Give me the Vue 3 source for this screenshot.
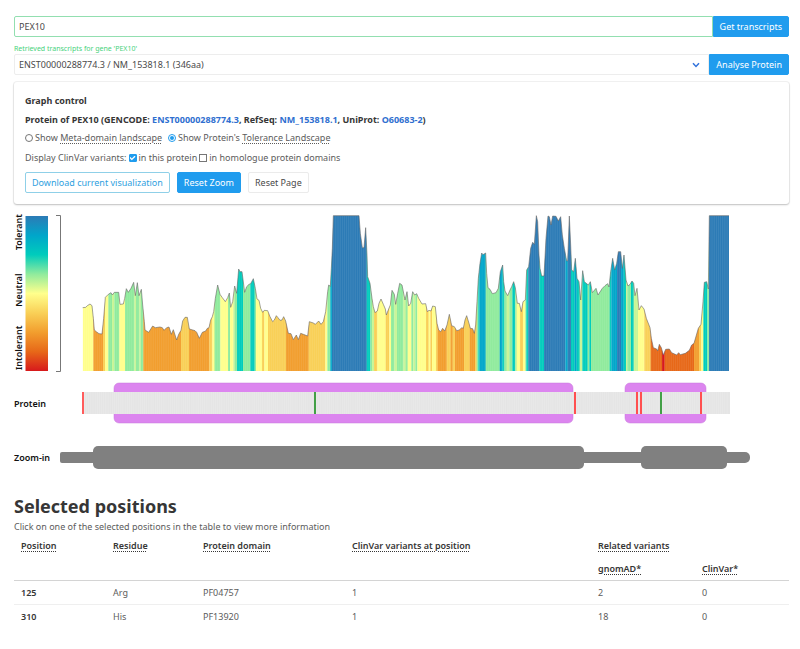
<script setup>
import { ref } from 'vue'

const gene = ref('PEX10')
const transcript = ref('ENST00000288774.3')
const landscape = ref('tolerance')
const inProtein = ref(true)
const inHomologues = ref(false)

const palette = {
  B: '#2c7bb6', A: '#00a6ca', T: '#00ccbc', G: '#90eb9d', L: '#c8f595',
  Y: '#ffff8c', S: '#f9d057', O: '#f29e2e', R: '#e76818', D: '#d7191c'
}
const legend = ['B', 'A', 'T', 'G', 'Y', 'S', 'O', 'R', 'D'].map((k, i) => ({
  offset: i / 8, color: palette[k]
}))

/* Tolerance profile in thirds of a chart unit: x,y pairs per segment with its x origin */
const segments = [
  [0, '248,308 257,307 262,302 270,297 276,302 280,340 283,375 290,381 297,386 306,387 311,340 316,277 325,268 333,263 337,270 343,262 356,262 360,298 370,297 374,280 379,251 385,262 393,250 401,232 406,272 412,233 417,272 424,253 428,300 433,350 435,375 446,382 458,363 466,368 480,366 487,368 492,376 500,368 507,366 514,388 520,374 530,405 536,388 543,376 548,348'],
  [540, '15,337 22,337 28,372 45,377 50,382 58,400 67,382 77,378 82,370 87,368 92,345 97,335 101,320 106,280 113,240 120,268 127,278 136,290 143,278 148,264 152,307 158,290 164,243 170,265 176,192 180,200 186,200 194,262 200,245 207,238 212,236 220,221 226,250 231,282 237,286 242,310 248,322 253,316 263,317 270,335 278,350 283,345 289,332 294,338 300,346 306,345 311,335 317,348 325,385 333,386 340,404 349,390 355,404 362,385 370,388 383,393 388,350 400,354 406,358 416,348 423,358 430,350 437,320 443,260 446,240 451,244 454,190 457,130 460,32 537,32 541,85 547,128 552,128 557,68 561,150'],
  [1080, '23,215 30,235 36,280 40,305 45,323 52,318 57,295 63,282 70,298 76,312 79,330 86,312 91,300 96,256 103,268 107,298 113,265 119,235 126,240 135,285 141,260 146,303 152,295 158,260 164,270 170,266 176,280 186,297 197,296 202,320 207,316 213,318 218,303 226,305 231,355 236,375 242,380 248,370 254,378 261,360 268,328 275,362 283,365 290,377 298,375 305,368 310,370 315,345 320,332 327,355 331,370 338,371 343,385 347,360 351,290 355,220 360,175 365,144 369,149 377,144 380,205 384,248 390,253 397,266 408,263 415,250 421,200 428,180 431,230 435,258 443,272 450,255 455,245 461,230 466,248 472,295 478,295 484,320 489,290 496,285 500,195 506,185 512,130 518,112 523,118 529,32 533,50 537,150 540,190 545,213'],
  [1620, '12,213 18,100 24,33 28,35 33,60 38,33 48,34 55,48 62,35 67,90 73,130 80,168 83,168 88,33 92,120 95,195 101,200 106,160 111,220 117,230 122,285 128,197 133,230 145,240 151,230 157,263 168,250 174,270 187,250 195,242 203,236 207,246 212,200 218,160 224,195 230,175 235,140 242,140 247,190 252,150 258,225 264,243 270,238 276,228 281,235 285,272 291,250 297,315 304,302 312,312 319,340 330,368 334,400 340,428 350,432 353,438 358,418 364,428 370,450 377,433 388,432 395,443 410,450 416,443 421,449 436,445 448,436 455,420 462,415 475,370 483,358 489,290 493,232 500,230 505,252 508,32 567,32']
]
const curve = segments.flatMap(([origin, pairs]) =>
  pairs.split(' ').map(p => {
    const [x, y] = p.split(',').map(Number)
    return `${((origin + x) / 3).toFixed(2)},${(205 + y / 3).toFixed(2)}`
  })
)
const area = ['82.67,371', ...curve, '729,371'].join(' ')
const outline = curve.join(' ')

/* Colour bands: start position and palette key */
const bandSegments = [
  [0, '248Y 280O 309S 315Y 325G 336L 343G 358Y 375G 403L 408G 418L 422G 430O 543S 567O'],
  [540, '88S 97Y 102L 105G 121Y 144G 150Y 160L 164G 171T 189G 211T 224G 228Y 246S 253Y 264S 318O 386S 436Y 442G 451A 456B'],
  [1080, '20T 31G 36L 42S 52Y 77S 88Y 93G 103L 111G 130L 137G 143Y 154G 160L 166G 172Y 198S 206Y 211S 216Y 228S 233O 260S 272O 278S 285O 312S 329O 345S 350G 355T 358A 377G 419A 427T 433G 440L 448G 457T 466L 471Y 480S 489Y 496G 499T 505B 538T'],
  [1620, '12B 76A 83B 93T 104A 110T 119L 127T 143G 148T 153G 209T 214A 231B 243A 251T 258L 262G 273T 281L 294Y 313S 332R 366D 374R 462O 477S 484Y 490T 502G 507B']
]
const starts = bandSegments.flatMap(([origin, list]) =>
  list.split(' ').map(b => ({ x: (origin + parseInt(b)) / 3, color: palette[b.slice(-1)] }))
)
const bands = starts.map((b, i) => ({
  ...b, width: (i + 1 < starts.length ? starts[i + 1].x : 729) - b.x + 0.2
}))

const residueStep = 647 / 346
const residues = Array.from({ length: 346 }, (_, i) => 82.5 + i * residueStep)

const domains = [{ x: 114, width: 459 }, { x: 625, width: 81 }]
const variants = [
  { x: 82, color: '#ff5c5c' }, { x: 314, color: '#43a047' }, { x: 574, color: '#ff5050' },
  { x: 636, color: '#ff5050' }, { x: 640, color: '#ff5050' }, { x: 660, color: '#43a047' },
  { x: 700, color: '#ff5050' }
]

const columns = [92, 90, 149, 246, 104, 94]
const rows = [
  { position: 125, residue: 'Arg', domain: 'PF04757', clinvar: 1, gnomad: 2, related: 0 },
  { position: 310, residue: 'His', domain: 'PF13920', clinvar: 1, gnomad: 18, related: 0 }
]
</script>

<template>
  <main class="page">
    <form class="field" @submit.prevent>
      <input v-model="gene" class="control gene" type="text" aria-label="Gene name" />
      <button class="button primary attached">Get transcripts</button>
    </form>
    <p class="help">Retrieved transcripts for gene 'PEX10'</p>
    <form class="field" @submit.prevent>
      <div class="select">
        <select v-model="transcript" class="control" aria-label="Transcript">
          <option value="ENST00000288774.3">ENST00000288774.3 / NM_153818.1 (346aa)</option>
        </select>
        <svg class="chevron" viewBox="0 0 8 6" aria-hidden="true"><path d="M1 1.2 4 4.4 7 1.2" /></svg>
      </div>
      <button class="button primary attached">Analyse Protein</button>
    </form>

    <section class="card">
      <h2 class="line">Graph control</h2>
      <p class="line strong">
        Protein of PEX10 (GENCODE: <a href="#gencode">ENST00000288774.3</a>, RefSeq:
        <a href="#refseq">NM_153818.1</a>, UniProt: <a href="#uniprot">O60683-2</a>)
      </p>
      <div class="line choices">
        <label><input v-model="landscape" type="radio" name="landscape" value="meta" /><span>Show <u>Meta-domain landscape</u></span></label>
        <label><input v-model="landscape" type="radio" name="landscape" value="tolerance" /><span>Show Protein's <u>Tolerance Landscape</u></span></label>
      </div>
      <div class="line checks">
        <span>Display ClinVar variants:</span>
        <label><input v-model="inProtein" type="checkbox" /><span>in this protein</span></label>
        <label><input v-model="inHomologues" type="checkbox" /><span>in homologue protein domains</span></label>
      </div>
      <div class="actions">
        <button class="button outlined">Download current visualization</button>
        <button class="button primary">Reset Zoom</button>
        <button class="button">Reset Page</button>
      </div>
    </section>

    <svg class="chart" viewBox="14 210 775 265" role="img" aria-label="Tolerance landscape">
      <defs>
        <linearGradient id="scale" x1="0" y1="0" x2="0" y2="1">
          <stop v-for="s in legend" :key="s.offset" :offset="s.offset" :stop-color="s.color" />
        </linearGradient>
        <clipPath id="profile"><polygon :points="area" /></clipPath>
      </defs>

      <g class="axis-label">
        <text transform="translate(22 370) rotate(-90)">Intolerant</text>
        <text transform="translate(22 290) rotate(-90)" text-anchor="middle">Neutral</text>
        <text transform="translate(22 214) rotate(-90)" text-anchor="end">Tolerant</text>
      </g>
      <rect x="25.5" y="216" width="22.5" height="155" fill="url(#scale)" />
      <path class="axis" d="M56 215.5h4.5v156H56" />

      <g clip-path="url(#profile)">
        <rect v-for="b in bands" :key="b.x" :x="b.x" y="215" :width="b.width" height="156" :fill="b.color" />
        <rect v-for="x in residues" :key="x" class="seam" :x="x" y="215" width="0.5" height="156" />
      </g>
      <polyline class="outline" :points="outline" />

      <text class="track-label" x="14" y="407">Protein</text>
      <rect v-for="d in domains" :key="d.x" class="domain" :x="d.x" y="383" :width="d.width" height="40" rx="5" />
      <rect class="track" x="82" y="392" width="648" height="22" />
      <rect v-for="x in residues" :key="'t' + x" class="track-seam" :x="x" y="392" width="0.5" height="22" />
      <rect v-for="v in variants" :key="v.x" :x="v.x" y="392" width="2" height="22" :fill="v.color" />

      <text class="track-label" x="14" y="461">Zoom-in</text>
      <g class="zoom">
        <rect x="60" y="452" width="60" height="11" rx="2" />
        <rect x="100" y="452" width="650" height="11" rx="5" />
        <rect x="93" y="446" width="491" height="23" rx="5" />
        <rect x="641" y="446" width="86" height="23" rx="5" />
      </g>
    </svg>

    <section class="positions">
      <h1>Selected positions</h1>
      <p>Click on one of the selected positions in the table to view more information</p>
      <table>
        <colgroup>
          <col v-for="(w, i) in columns" :key="i" :style="{ width: (w / 775) * 100 + '%' }" />
        </colgroup>
        <thead>
          <tr>
            <th rowspan="2"><u>Position</u></th>
            <th rowspan="2"><u>Residue</u></th>
            <th rowspan="2"><u>Protein domain</u></th>
            <th rowspan="2"><u>ClinVar variants at position</u></th>
            <th colspan="2"><u>Related variants</u></th>
          </tr>
          <tr>
            <th><u>gnomAD*</u></th>
            <th><u>ClinVar*</u></th>
          </tr>
        </thead>
        <tbody>
          <tr v-for="r in rows" :key="r.position">
            <th>{{ r.position }}</th>
            <td>{{ r.residue }}</td>
            <td>{{ r.domain }}</td>
            <td>{{ r.clinvar }}</td>
            <td>{{ r.gnomad }}</td>
            <td>{{ r.related }}</td>
          </tr>
        </tbody>
      </table>
    </section>
  </main>
</template>

<style>
body {
  background: #fff;
}
</style>

<style scoped>
.page {
  box-sizing: border-box;
  padding: 16px 11px 20px 14px;
  color: #5c5c5c;
  font-family: "Noto Sans", "Open Sans", sans-serif;
  font-size: 9px;
  line-height: 14px;
}
h1, h2, p {
  margin: 0;
}
.field {
  display: flex;
}
.control {
  box-sizing: border-box;
  width: 100%;
  height: 21px;
  padding: 0 4px;
  border: 1px solid #ededed;
  border-radius: 2px 0 0 2px;
  background: #fff;
  color: #4a4a4a;
  font: inherit;
  outline: none;
  appearance: none;
}
.gene {
  flex: 1;
  border-color: #92dfb0;
}
.select {
  position: relative;
  flex: 1;
}
.chevron {
  position: absolute;
  top: 8px;
  right: 9px;
  width: 8px;
  height: 6px;
  fill: none;
  stroke: #3273dc;
  stroke-width: 1.5;
  pointer-events: none;
}
.help {
  height: 17px;
  color: #48d27d;
  font-size: 7px;
  line-height: 24px;
}
.button {
  box-sizing: border-box;
  height: 21px;
  padding: 0 6px;
  border: 1px solid #ebebeb;
  border-radius: 2px;
  background: #fff;
  color: #4a4a4a;
  font: inherit;
  white-space: nowrap;
}
.primary {
  border-color: #209cee;
  background: #209cee;
  color: #fff;
}
.outlined {
  border-color: #8fd0e8;
  color: #2f9fe0;
}
.attached {
  border-radius: 0 2px 2px 0;
}
.card {
  margin-top: 7px;
  padding: 12px 11px 11px;
  border-radius: 3px;
  box-shadow: 0 1px 2px rgba(10, 10, 10, 0.22), 0 0 0 1px rgba(10, 10, 10, 0.05);
}
.line {
  margin-bottom: 5px;
}
h2, .strong {
  color: #363636;
  font-size: 9px;
  font-weight: 700;
}
a {
  color: #2f6fd0;
  text-decoration: none;
}
u {
  text-decoration: underline dotted 1px;
  text-underline-offset: 2px;
}
.choices, .checks, label, .actions {
  display: flex;
  align-items: center;
}
.choices {
  gap: 6px;
  margin-top: -1px;
}
.checks {
  gap: 2px;
  padding-top: 1px;
}
label {
  gap: 2px;
}
input[type="radio"], input[type="checkbox"] {
  display: grid;
  place-items: center;
  box-sizing: border-box;
  width: 8px;
  height: 8px;
  margin: 0;
  border: 1px solid #767676;
  background: #fff;
  appearance: none;
}
input[type="radio"] {
  border-radius: 50%;
}
input[type="radio"]:checked, input[type="checkbox"]:checked {
  border-color: #209cee;
}
input[type="radio"]:checked::before {
  content: "";
  width: 4px;
  height: 4px;
  border-radius: 50%;
  background: #209cee;
}
input[type="checkbox"]:checked {
  border-radius: 1px;
  background: #209cee;
}
input[type="checkbox"]:checked::before {
  content: "";
  width: 6px;
  height: 5px;
  background: #fff;
  clip-path: polygon(0 50%, 16% 32%, 38% 60%, 84% 5%, 100% 24%, 38% 96%);
}
.actions {
  gap: 7px;
  margin-top: 7px;
}
.chart {
  display: block;
  width: 100%;
  margin-top: 6px;
  overflow: visible;
}
.axis-label, .track-label {
  fill: #111;
  font-size: 9px;
  font-weight: 600;
}
.axis {
  fill: none;
  stroke: #777;
}
.seam {
  fill: #fff;
  fill-opacity: 0.14;
}
.outline {
  fill: none;
  stroke: #666;
  stroke-width: 0.6;
}
.domain {
  fill: #dc85ef;
  stroke: #c77ad8;
  stroke-width: 0.5;
}
.track {
  fill: #e5e5e5;
}
.track-seam {
  fill: #efefef;
  fill-opacity: 0.6;
}
.zoom {
  fill: #808080;
}
.positions {
  padding-top: 17px;
}
h1 {
  color: #363636;
  font-size: 18px;
  font-weight: 700;
  line-height: 28px;
}
table {
  width: 100%;
  border-collapse: collapse;
  table-layout: fixed;
}
th, td {
  padding: 5px 7px 4px;
  border-bottom: 1px solid #efefef;
  text-align: left;
  vertical-align: top;
}
th {
  color: #363636;
  font-weight: 600;
}
thead th {
  border-bottom-color: #d4d4d4;
}
thead th[colspan] {
  border-bottom: 0;
}
tbody tr:last-child > * {
  border-bottom: 0;
}
</style>
